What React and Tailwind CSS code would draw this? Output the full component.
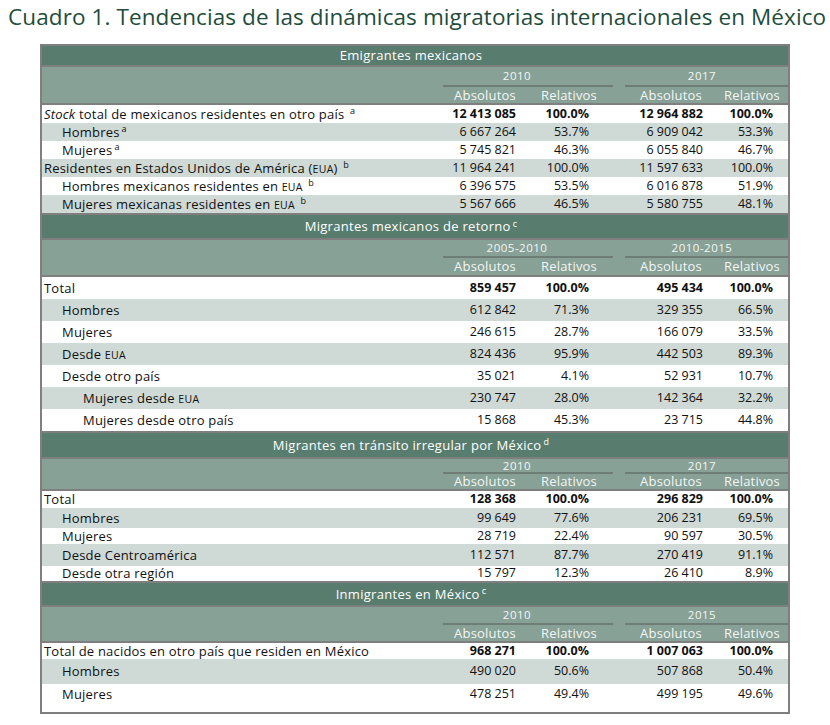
const GRID = "grid grid-cols-[401px_84px_86px_12px_92px_71px]";

const EUA = () => <span className="text-[10.5px] tracking-[0.03em]">EUA</span>;
const Sup = ({ children }) => <sup className="text-[9px] ml-[2px]">{children}</sup>;

const sections = [
  {
    title: "Emigrantes mexicanos",
    headH: "h-[19px]",
    subH: "h-[36px]",
    yearH: "h-[20px]",
    years: ["2010", "2017"],
    rows: [
      { label: <><i>Stock</i> total de mexicanos residentes en otro país <Sup>a</Sup></>, lvl: 0, bold: true, h: "h-[18px]", v: ["12 413 085", "100.0%", "12 964 882", "100.0%"] },
      { label: <>Hombres<Sup>a</Sup></>, lvl: 1, h: "h-[18px]", v: ["6 667 264", "53.7%", "6 909 042", "53.3%"] },
      { label: <>Mujeres<Sup>a</Sup></>, lvl: 1, h: "h-[18px]", v: ["5 745 821", "46.3%", "6 055 840", "46.7%"] },
      { label: <>Residentes en Estados Unidos de América (<EUA />) <Sup>b</Sup></>, lvl: 0, h: "h-[18px]", v: ["11 964 241", "100.0%", "11 597 633", "100.0%"] },
      { label: <>Hombres mexicanos residentes en <EUA /> <Sup>b</Sup></>, lvl: 1, h: "h-[18px]", v: ["6 396 575", "53.5%", "6 016 878", "51.9%"] },
      { label: <>Mujeres mexicanas residentes en <EUA /> <Sup>b</Sup></>, lvl: 1, h: "h-[18px]", v: ["5 567 666", "46.5%", "5 580 755", "48.1%"] },
    ],
  },
  {
    title: <>Migrantes mexicanos de retorno<Sup>c</Sup></>,
    headH: "h-[23px]",
    subH: "h-[35px]",
    yearH: "h-[18px]",
    years: ["2005-2010", "2010-2015"],
    rows: [
      { label: "Total", lvl: 0, bold: true, h: "h-[22px]", v: ["859 457", "100.0%", "495 434", "100.0%"] },
      { label: "Hombres", lvl: 1, h: "h-[22px]", v: ["612 842", "71.3%", "329 355", "66.5%"] },
      { label: "Mujeres", lvl: 1, h: "h-[22px]", v: ["246 615", "28.7%", "166 079", "33.5%"] },
      { label: <>Desde <EUA /></>, lvl: 1, h: "h-[22px]", v: ["824 436", "95.9%", "442 503", "89.3%"] },
      { label: "Desde otro país", lvl: 1, h: "h-[22px]", v: ["35 021", "4.1%", "52 931", "10.7%"] },
      { label: <>Mujeres desde <EUA /></>, lvl: 2, h: "h-[22px]", v: ["230 747", "28.0%", "142 364", "32.2%"] },
      { label: "Mujeres desde otro país", lvl: 2, h: "h-[22px]", v: ["15 868", "45.3%", "23 715", "44.8%"] },
    ],
  },
  {
    title: <>Migrantes en tránsito irregular por México<Sup>d</Sup></>,
    headH: "h-[24px]",
    subH: "h-[30px]",
    yearH: "h-[15px]",
    years: ["2010", "2017"],
    rows: [
      { label: "Total", lvl: 0, bold: true, h: "h-[17px]", v: ["128 368", "100.0%", "296 829", "100.0%"] },
      { label: "Hombres", lvl: 1, h: "h-[20px]", v: ["99 649", "77.6%", "206 231", "69.5%"] },
      { label: "Mujeres", lvl: 1, h: "h-[16px]", v: ["28 719", "22.4%", "90 597", "30.5%"] },
      { label: "Desde Centroamérica", lvl: 1, h: "h-[22px]", v: ["112 571", "87.7%", "270 419", "91.1%"] },
      { label: "Desde otra región", lvl: 1, h: "h-[15px]", v: ["15 797", "12.3%", "26 410", "8.9%"] },
    ],
  },
  {
    title: <>Inmigrantes en México<Sup>c</Sup></>,
    headH: "h-[22px]",
    subH: "h-[34px]",
    yearH: "h-[18px]",
    years: ["2010", "2015"],
    rows: [
      { label: "Total de nacidos en otro país que residen en México", lvl: 0, bold: true, h: "h-[16px]", v: ["968 271", "100.0%", "1 007 063", "100.0%"] },
      { label: "Hombres", lvl: 1, h: "h-[25px]", v: ["490 020", "50.6%", "507 868", "50.4%"] },
      { label: "Mujeres", lvl: 1, h: "h-[28px] pb-[8px]", v: ["478 251", "49.4%", "499 195", "49.6%"] },
    ],
  },
];

const indent = ["pl-[2px]", "pl-[20px]", "pl-[41px]"];

function Section({ s, first }) {
  return (
    <div className={first ? "" : "border-t-2 border-[#7f7f7f]"}>
      <div className={`${s.headH} bg-[#587c6e] text-white text-[13px] tracking-[0.3px] flex items-center justify-center pr-[8px]`}>
        <span>{s.title}</span>
      </div>
      <div className={`${s.subH} bg-[#87a197] border-t-2 border-b-2 border-[#7f7f7f] box-content ${GRID} grid-rows-[auto_1fr] text-[13px] text-[#f3f6f4]`}>
        <div className={s.yearH}></div>
        <div className={`col-span-2 ${s.yearH} border-b-2 border-[#6f7d77] flex items-center justify-center pr-[22px] text-[11.5px] tracking-[0.5px]`}>
          {s.years[0]}
        </div>
        <div></div>
        <div className={`col-span-2 ${s.yearH} border-b-2 border-[#6f7d77] flex items-center justify-center pr-[9px] text-[11.5px] tracking-[0.5px]`}>
          {s.years[1]}
        </div>
        <div></div>
        <div className="flex items-center justify-end pr-[11px] tracking-[0.2px]">Absolutos</div>
        <div className="flex items-center justify-end pr-[16px] tracking-[0.2px]">Relativos</div>
        <div></div>
        <div className="flex items-center justify-end pr-[15px] tracking-[0.2px]">Absolutos</div>
        <div className="flex items-center justify-end pr-[8px] tracking-[0.2px]">Relativos</div>
      </div>
      {s.rows.map((r, i) => (
        <div
          key={i}
          className={`${GRID} ${r.h} ${i % 2 ? "bg-[#cfd9d5]" : "bg-white"} items-center text-[12.5px] text-[#111]`}
        >
          <div className={`${indent[r.lvl]} whitespace-nowrap text-[13px] tracking-[0.2px]`}>{r.label}</div>
          <div className={`text-right pr-[11px] ${r.bold ? "font-bold" : ""}`}>{r.v[0]}</div>
          <div className={`text-right pr-[24px] ${r.bold ? "font-bold" : ""}`}>{r.v[1]}</div>
          <div></div>
          <div className={`text-right pr-[14px] ${r.bold ? "font-bold" : ""}`}>{r.v[2]}</div>
          <div className={`text-right pr-[15px] ${r.bold ? "font-bold" : ""}`}>{r.v[3]}</div>
        </div>
      ))}
    </div>
  );
}

export default function App() {
  return (
    <div className="w-[830px] h-[725px] bg-white font-['Open_Sans',sans-serif] leading-none">
      <h1 className="pl-[8px] pt-[6px] h-[44px] text-[22.5px] text-[#1e4d3b] whitespace-nowrap tracking-[0.1px]">
        Cuadro 1. Tendencias de las dinámicas migratorias internacionales en México
      </h1>
      <div className="ml-[40px] w-[750px] border-2 border-[#7f7f7f]">
        {sections.map((s, i) => (
          <Section key={i} s={s} first={i === 0} />
        ))}
      </div>
    </div>
  );
}
